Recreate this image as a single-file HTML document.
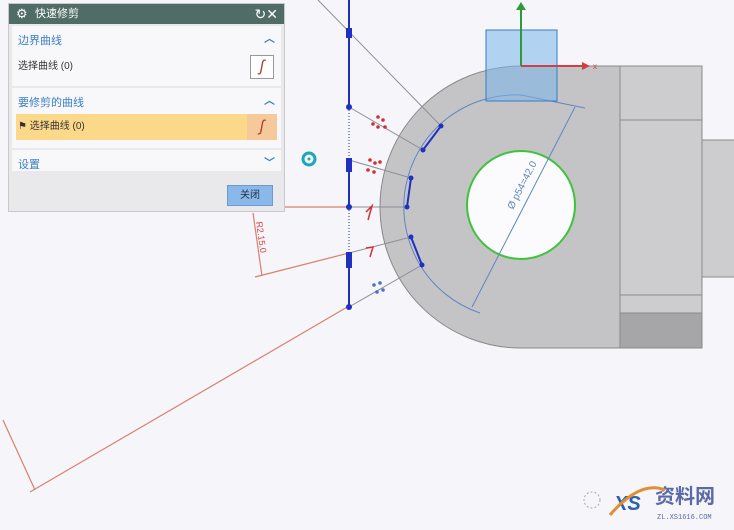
<!DOCTYPE html>
<html><head><meta charset="utf-8"><style>
body{margin:0;width:734px;height:530px;overflow:hidden;background:#f6f5f9;font-family:"Liberation Sans","Noto Sans CJK SC",sans-serif;position:relative}
svg{position:absolute;left:0;top:0}
.panel{position:absolute;left:8px;top:3px;width:277px;height:209px;background:#e9e9ec;border:1px solid #c9c9cc;box-sizing:border-box}
.title{height:20px;background:#4f6d66;color:#fff;font-size:11px;line-height:20px;padding-left:26px;position:relative}
.sec{background:#f8f8fa;margin:2px 3px 0 3px;position:relative}
.h{color:#3a7fc4;font-size:11px;padding:6px 0 0 6px;height:14px}
.car{position:absolute;right:6px;top:4px;color:#3a7fc4;font-size:11px;font-weight:bold}
.row{font-size:10px;color:#333;padding-left:6px;height:26px;line-height:26px;position:relative}
.btn{position:absolute;left:218px;top:181px;width:44px;height:19px;background:#8ab8ea;border:1px solid #6a9ad0;font-size:10px;color:#234;text-align:center;line-height:19px}
</style></head><body>
<svg width="734" height="530" viewBox="0 0 734 530">
<!-- part -->
<path d="M521 66 L620 66 L620 348 L521 348 A141 141 0 0 1 521 66Z" fill="#c4c4c6" stroke="#8a8a8c"/>
<rect x="620" y="66" width="82" height="282" fill="#cdcdcf" stroke="#8a8a8c"/>
<line x1="620" y1="120" x2="702" y2="120" stroke="#8a8a8c"/>
<line x1="620" y1="295" x2="702" y2="295" stroke="#8a8a8c"/>
<rect x="620" y="313" width="82" height="35" fill="#a6a6a8" stroke="#8a8a8c"/>
<rect x="702" y="140" width="34" height="137" fill="#cdcdcf" stroke="#8a8a8c"/>
<path d="M521 95 A112 112 0 0 0 480 313" fill="none" stroke="#5f86c0" stroke-width="1"/>
<path d="M521 95 L585 108" fill="none" stroke="#5f86c0"/>
<circle cx="521" cy="205" r="54" fill="#fbfbfd" stroke="#3cc43c" stroke-width="2"/>
<line x1="472" y1="307" x2="575" y2="107" stroke="#5f86c0"/>
<text x="0" y="0" transform="translate(513,210) rotate(-63)" font-size="10" fill="#5f86c0">Ø p54=42.0</text>
<!-- csys -->
<rect x="486" y="30" width="71" height="71" fill="#7ab4ec" fill-opacity="0.55" stroke="#3a7ac0"/>
<line x1="521" y1="66" x2="521" y2="8" stroke="#2f9a3a" stroke-width="2"/>
<path d="M516 10 L521 2 L526 10Z" fill="#2f9a3a"/>
<line x1="521" y1="66" x2="585" y2="66" stroke="#d04040" stroke-width="2"/>
<path d="M582 62 L590 66 L582 70Z" fill="#d04040"/>
<text x="593" y="69" font-size="8" fill="#d04040">x</text>
<!-- gray leader lines -->
<g stroke="#8a8f9a" stroke-width="1">
<line x1="318" y1="0" x2="441" y2="126"/>
<line x1="349" y1="107" x2="423" y2="150"/>
<line x1="349" y1="160" x2="411" y2="178"/>
<line x1="349" y1="207" x2="407" y2="207"/>
<line x1="349" y1="253" x2="411" y2="237"/>
<line x1="349" y1="307" x2="422" y2="265"/>
</g>
<!-- red lines -->
<g stroke="#d88070" stroke-width="1.2" fill="none">
<line x1="218" y1="207" x2="349" y2="207"/>
<line x1="255" y1="277" x2="349" y2="253"/>
<line x1="30" y1="492" x2="349" y2="306"/>
<line x1="3" y1="420" x2="35" y2="490"/>
<line x1="253" y1="213" x2="262" y2="276"/>
</g>
<text transform="translate(256,222) rotate(82)" font-size="9" fill="#d04040">R2.15.0</text>
<!-- blue vertical -->
<g stroke="#2030c0" stroke-width="2">
<line x1="349" y1="0" x2="349" y2="107"/>
<line x1="349" y1="160" x2="349" y2="207"/>
<line x1="349" y1="253" x2="349" y2="307"/>
<line x1="441" y1="126" x2="423" y2="150"/>
<line x1="411" y1="178" x2="407" y2="207"/>
<line x1="411" y1="237" x2="422" y2="265"/>
</g>
<g stroke="#2030c0" stroke-dasharray="1 2"><line x1="349" y1="107" x2="349" y2="160"/><line x1="349" y1="207" x2="349" y2="253"/></g>
<g fill="#2030c0">
<circle cx="349" cy="107" r="3"/><circle cx="349" cy="207" r="3"/><circle cx="349" cy="307" r="3"/>
<circle cx="441" cy="126" r="2.5"/><circle cx="423" cy="150" r="2.5"/><circle cx="411" cy="178" r="2.5"/><circle cx="407" cy="207" r="2.5"/><circle cx="411" cy="237" r="2.5"/><circle cx="422" cy="265" r="2.5"/>
<rect x="346" y="28" width="6" height="10"/><rect x="346" y="158" width="6" height="14"/><rect x="346" y="252" width="6" height="16"/>
</g>
<g fill="#d03030"><circle cx="378" cy="117" r="1.8"/><circle cx="383" cy="120" r="1.8"/><circle cx="373" cy="124" r="1.8"/><circle cx="378" cy="127" r="1.8"/><circle cx="385" cy="127" r="1.8"/>
<circle cx="370" cy="160" r="1.8"/><circle cx="375" cy="163" r="1.8"/><circle cx="380" cy="162" r="1.8"/><circle cx="368" cy="170" r="1.8"/><circle cx="374" cy="172" r="1.8"/></g>
<g fill="#4a70d0"><circle cx="374" cy="285" r="1.8"/><circle cx="380" cy="283" r="1.8"/><circle cx="377" cy="292" r="1.8"/><circle cx="383" cy="290" r="1.8"/></g>
<path d="M366 212 L372 206 L368 220" stroke="#d03030" fill="none" stroke-width="1.5"/>
<path d="M366 248 L373 247 L370 257" stroke="#d03030" fill="none" stroke-width="1.5"/>
<circle cx="309" cy="159" r="6" fill="none" stroke="#18a8b8" stroke-width="3"/><circle cx="309" cy="159" r="1.5" fill="#18a8b8"/>
<!-- watermark -->
<text x="655" y="503" font-size="20" font-weight="bold" fill="#5a6aa8" font-family="'Noto Sans CJK SC',sans-serif">资料网</text>
<text x="657" y="519" font-size="7" fill="#5a6aa8" font-family="'Liberation Mono',monospace">ZL.XS1616.COM</text>
<text x="614" y="510" font-size="20" font-style="italic" font-weight="bold" fill="#2a60b0">XS</text>
<path d="M610 515 Q640 480 665 490" stroke="#e09030" stroke-width="3" fill="none"/>
<circle cx="592" cy="500" r="8" fill="none" stroke="#aaa" stroke-dasharray="2 2"/>
</svg>
<div class="panel">
<div class="title"><span style="position:absolute;left:7px;top:0;font-size:13px">⚙</span>快速修剪<span style="position:absolute;right:6px;top:0;font-size:14px">↻✕</span></div>
<div class="sec" style="height:60px"><div class="h">边界曲线</div><span class="car">︿</span>
<div class="row" style="margin-top:8px">选择曲线 (0)<span style="position:absolute;right:7px;top:1px;width:22px;height:22px;border:1px solid #999;background:#fff;color:#b04030;text-align:center;line-height:22px;font-size:16px;font-style:italic">ʃ</span></div></div>
<div class="sec" style="height:60px"><div class="h">要修剪的曲线</div><span class="car">︿</span>
<div class="row" style="background:#fcd98a;margin:6px 4px 0 4px;padding-left:2px">⚑ 选择曲线 (0)<span style="position:absolute;right:0;top:0;width:30px;height:26px;background:#f6c99a;color:#b04030;text-align:center;font-size:16px;font-style:italic">ʃ</span></div></div>
<div class="sec" style="height:21px"><div class="h">设置</div><span class="car">﹀</span></div>
<div class="btn">关闭</div>
</div>
</body></html>
